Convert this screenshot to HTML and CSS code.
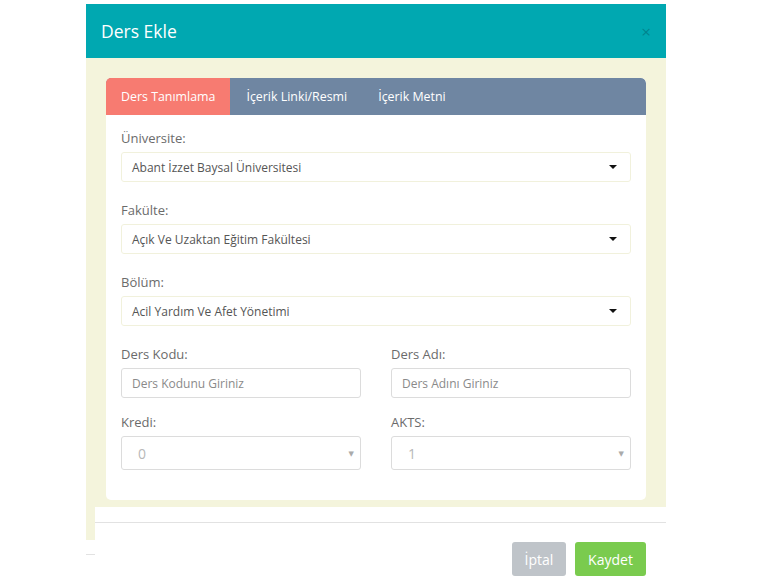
FILE: index.html
```html
<!DOCTYPE html>
<html lang="tr">
<head>
<meta charset="utf-8">
<title>Ders Ekle</title>
<link rel="stylesheet" href="styles.css">
</head>
<body>
<div class="modal">
  <div class="modal-header">
    <h4 class="modal-title">Ders Ekle</h4>
    <span class="close">×</span>
  </div>
  <div class="modal-body">
    <div class="card">
      <div class="tabs">
        <div class="tab active">Ders Tanımlama</div>
        <div class="tab">İçerik Linki/Resmi</div>
        <div class="tab">İçerik Metni</div>
      </div>
      <div class="card-content">
        <div class="group">
          <div class="label">Üniversite:</div>
          <div class="select"><span>Abant İzzet Baysal Üniversitesi</span><i class="caret"></i></div>
        </div>
        <div class="group">
          <div class="label">Fakülte:</div>
          <div class="select"><span>Açık Ve Uzaktan Eğitim Fakültesi</span><i class="caret"></i></div>
        </div>
        <div class="group">
          <div class="label">Bölüm:</div>
          <div class="select"><span>Acil Yardım Ve Afet Yönetimi</span><i class="caret"></i></div>
        </div>
        <div class="row">
          <div class="group">
            <div class="label">Ders Kodu:</div>
            <div class="input">Ders Kodunu Giriniz</div>
          </div>
          <div class="group">
            <div class="label">Ders Adı:</div>
            <div class="input">Ders Adını Giriniz</div>
          </div>
        </div>
        <div class="row last">
          <div class="group">
            <div class="label">Kredi:</div>
            <div class="num-select"><span>0</span><i class="small-caret">▼</i></div>
          </div>
          <div class="group">
            <div class="label">AKTS:</div>
            <div class="num-select"><span>1</span><i class="small-caret">▼</i></div>
          </div>
        </div>
      </div>
    </div>
  </div>
  <div class="modal-footer">
    <div class="footer-side">
      <div class="strip"></div>
      <div class="side-line"></div>
    </div>
    <div class="footer-main">
      <div class="divider"></div>
      <div class="buttons">
        <button class="btn btn-cancel">İptal</button>
        <button class="btn btn-save">Kaydet</button>
      </div>
    </div>
  </div>
</div>
</body>
</html>
```

FILE: styles.css
```css
* { box-sizing: border-box; }
html, body { margin: 0; padding: 0; background: #fff; }
body {
  font-family: "Open Sans", "Noto Sans", "DejaVu Sans", sans-serif;
  color: #6a6a6a;
}
.modal {
  width: 580px;
  margin: 4px 0 0 86px;
}
.modal-header {
  height: 54px;
  background: #00a8b1;
  display: flex;
  align-items: center;
  justify-content: space-between;
  padding: 0 15px;
}
.modal-title {
  margin: 0;
  font-weight: 400;
  font-size: 17.5px;
  color: #fff;
}
.close {
  font-size: 17px;
  color: rgba(0, 60, 70, 0.35);
  line-height: 1;
}
.modal-body {
  background: #f4f4dc;
  padding: 20px 20px 7px;
}
.card {
  background: #fff;
  border-radius: 5px;
  overflow: hidden;
}
.tabs {
  display: flex;
  height: 37px;
  background: #6f86a2;
  border-radius: 5px 5px 0 0;
}
.tab {
  padding: 0 15px 0 16px;
  display: flex;
  align-items: center;
  font-size: 12.4px;
  color: #fff;
}
.tab.active { background: #f77b71; padding: 0 15px; }
.card-content {
  padding: 13px 15px 30px;
}
.group { margin-bottom: 18px; }
.label {
  font-size: 13px;
  line-height: 20px;
  height: 20px;
  color: #6b6b6b;
  margin-bottom: 4px;
}
.select {
  height: 30px;
  border: 1px solid #f1f1dc;
  border-radius: 3px;
  display: flex;
  align-items: center;
  justify-content: space-between;
  padding: 0 13px 0 10px;
  font-size: 12px;
  color: #555;
}
.caret {
  width: 0;
  height: 0;
  border-left: 4px solid transparent;
  border-right: 4px solid transparent;
  border-top: 4px solid #111;
}
.row {
  display: grid;
  grid-template-columns: 1fr 1fr;
  column-gap: 30px;
}
.row .group { margin-bottom: 14px; }
.row.last .group { margin-bottom: 0; }
.input {
  height: 30px;
  border: 1px solid #dcdcdc;
  border-radius: 3px;
  display: flex;
  align-items: center;
  padding: 0 10px;
  font-size: 12px;
  color: #8a8a8a;
}
.num-select {
  height: 34px;
  border: 1px solid #dcdcdc;
  border-radius: 3px;
  display: flex;
  align-items: center;
  justify-content: space-between;
  padding: 0 6px 0 16px;
  font-size: 14px;
  color: #b8b8b8;
}
.small-caret {
  font-style: normal;
  font-size: 7px;
  color: #aaa;
}
.modal-footer {
  display: flex;
}
.footer-side {
  width: 9px;
  display: flex;
  flex-direction: column;
}
.strip {
  height: 33px;
  background: #f4f4dc;
}
.side-line {
  margin-top: 14px;
  height: 1px;
  background: #e2e2e2;
}
.footer-main {
  flex: 1;
  padding-top: 15px;
}
.divider {
  height: 1px;
  background: #e2e2e2;
}
.buttons {
  display: flex;
  justify-content: flex-end;
  gap: 9px;
  padding: 19px 20px 0;
}
.btn {
  font-family: inherit;
  font-size: 14px;
  color: #fff;
  border: none;
  border-radius: 3px;
  height: 34px;
  padding: 0;
  cursor: pointer;
}
.btn-cancel { background: #bfc4c9; width: 54px; }
.btn-save { background: #7acb4e; width: 71px; }
```
